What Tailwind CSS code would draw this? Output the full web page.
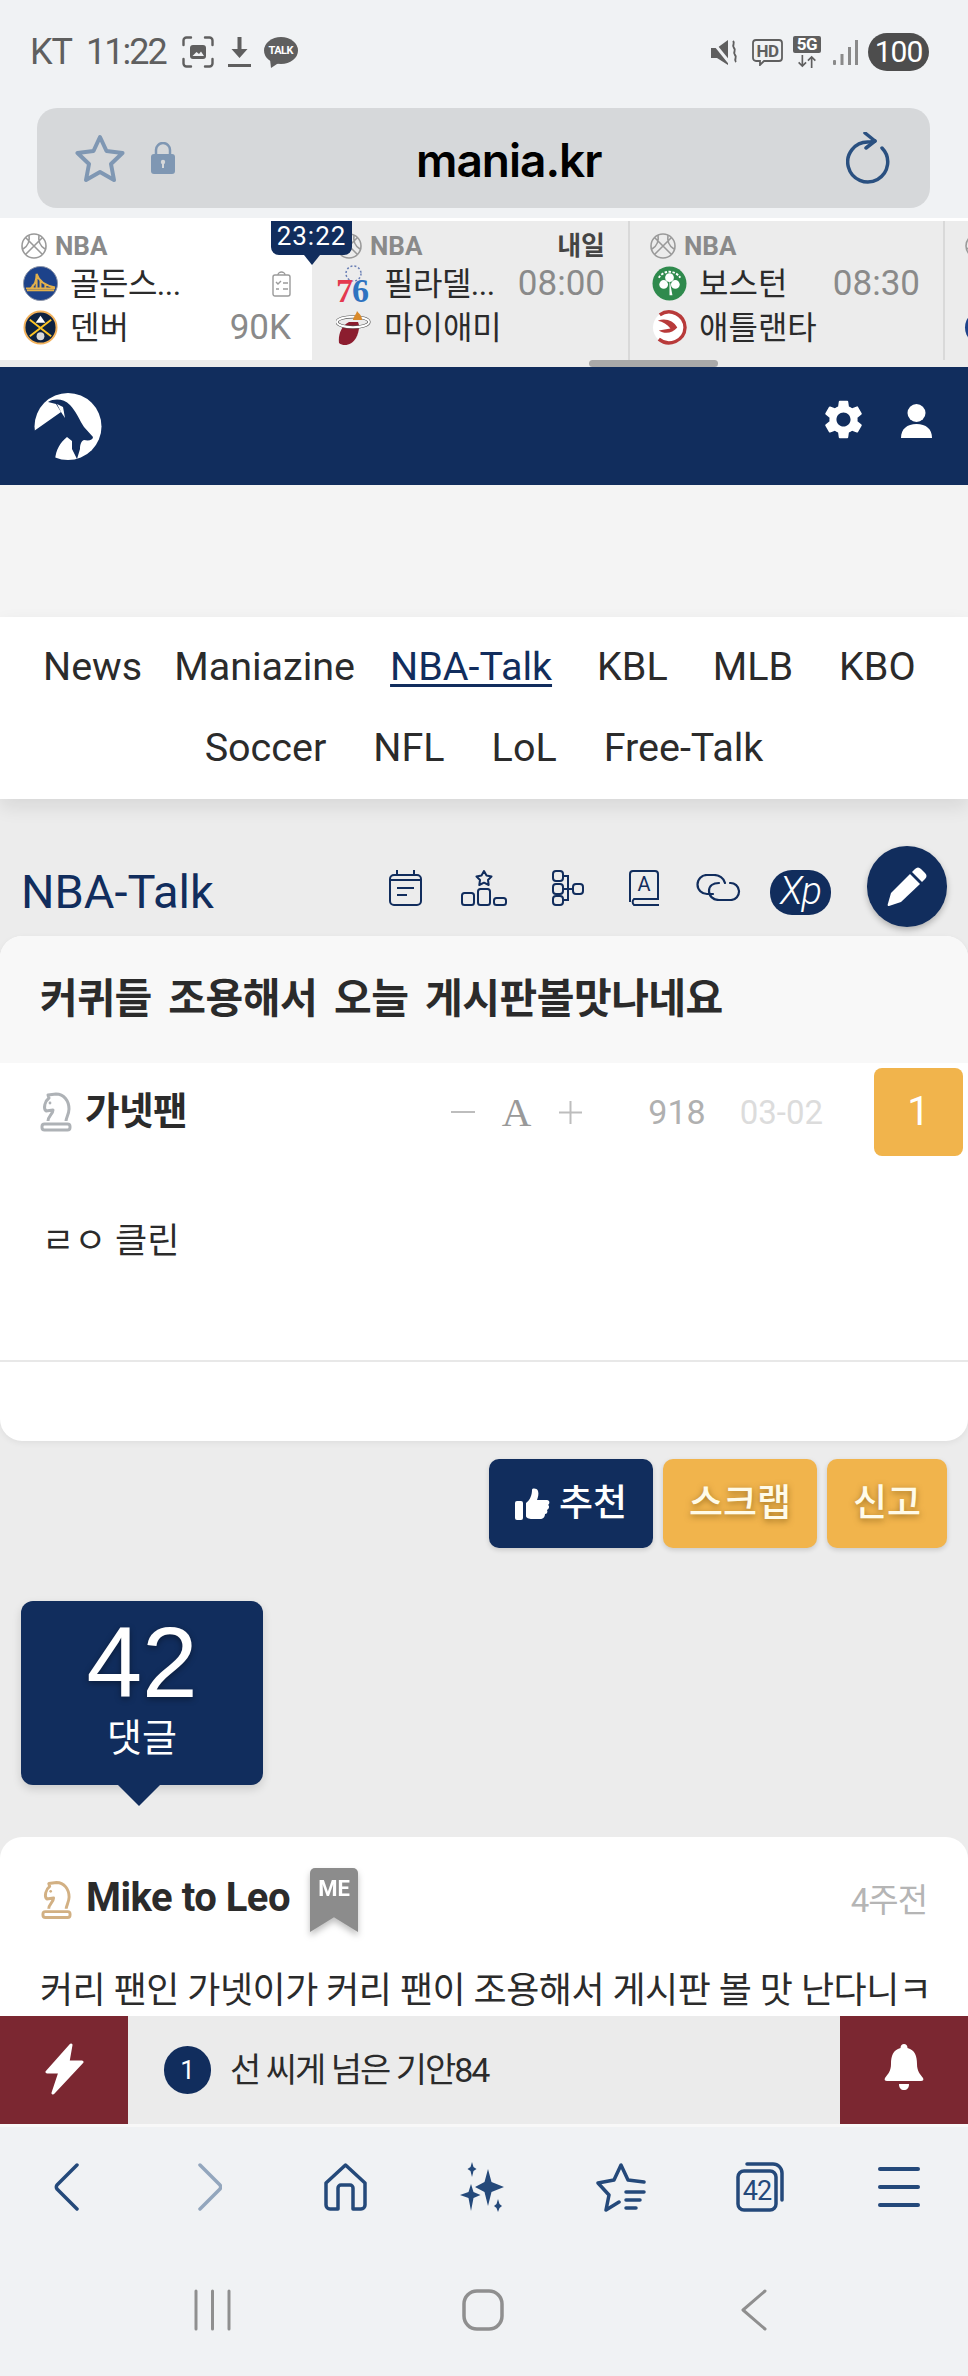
<!DOCTYPE html>
<html lang="ko">
<head>
<meta charset="UTF-8">
<meta name="viewport" content="width=device-width, initial-scale=1.0">
<title>NBA-Talk - mania.kr</title>
<script src="https://cdn.jsdelivr.net/npm/@tailwindcss/browser@4"></script>
</head>
<body class="bg-[#ececec]">
<svg class="hidden" aria-hidden="true">
  <symbol id="ball" viewBox="0 0 26 26">
    <g fill="none" stroke="#9a9a9a" stroke-width="1.6">
      <circle cx="13" cy="13" r="12"/>
      <path d="M4.5 4.5 21.5 21.5M21.5 4.5 4.5 21.5M8 2C9 8 7 13 2 16M18 2C17 8 19 13 24 16"/>
    </g>
  </symbol>
  <symbol id="knight" viewBox="0 0 32 40">
    <path d="M8 29C8 24 13 22 13 18L6 19C3 16 5 9 9 6L8 3L16 2C24 2 29 9 29 17C29 22 26 26 26 29" fill="none" stroke="currentColor" stroke-width="3" stroke-linejoin="round"/>
    <circle cx="10" cy="11" r="1.4" fill="currentColor"/>
    <rect x="2" y="32" width="28" height="6" rx="2.5" fill="none" stroke="currentColor" stroke-width="3"/>
  </symbol>
</svg>

<div class="w-[968px] h-[2376px] overflow-hidden flex flex-col font-['Roboto','Noto_Sans_CJK_KR',sans-serif] text-[#2b2b2b]">

  <!-- status bar -->
  <div class="h-[108px] shrink-0 bg-[#f0f2f4] flex items-center pl-[30px] pr-[39px] pb-[4px] text-[#5f5f5f]">
    <span class="text-[36px] leading-none tracking-[-1px]">KT</span>
    <span class="text-[36px] leading-none ml-[14px] tracking-[-2px]">11:22</span>
    <svg class="w-[32px] h-[32px] ml-[16px]" viewBox="0 0 32 32" fill="none" stroke="#5f5f5f" stroke-width="2.4" stroke-linecap="round">
      <path d="M1.5 9V4.5a3 3 0 0 1 3-3H9M23 1.5h4.500a3 3 0 0 1 3 3V9M1.500 23v4.500a3 3 0 0 0 3 3H9M30.500 23v4.500a3 3 0 0 1-3 3H23"/>
      <rect x="8" y="9" width="16" height="14" rx="3" fill="#5f5f5f" stroke="none"/>
      <path d="M10.500 20l4-4 2.500 2 2-2.500 3 4.500z" fill="#f0f2f4" stroke="none"/>
    </svg>
    <svg class="w-[23px] h-[31px] ml-[14px]" viewBox="0 0 23 31" fill="#5f5f5f">
      <path d="M9.500 0h4v12h6L11.500 21 3.500 12h6z"/><rect y="27" width="23" height="3"/>
    </svg>
    <div class="relative ml-[13px] w-[34px] h-[31px]">
      <svg class="w-[34px] h-[31px]" viewBox="0 0 34 31" fill="#5f5f5f"><ellipse cx="17" cy="13.500" rx="17" ry="13.500"/><path d="M6 22l1 9 9-6z"/></svg>
      <span class="absolute left-0 top-[7px] w-[34px] text-center text-[11px] leading-[13px] font-bold text-white tracking-[-0.5px]">TALK</span>
    </div>

    <svg class="w-[27px] h-[27px] ml-auto" viewBox="0 0 27 27" fill="#5f5f5f">
      <path d="M0 9h6l11-8v25L6 19H0z"/>
      <path d="M1 2 18 23" stroke="#f0f2f4" stroke-width="3"/>
      <path d="M22 2c3 3-2 4 1 7s-2 4 1 7-2 4 1 7" fill="none" stroke="#5f5f5f" stroke-width="2"/>
    </svg>
    <div class="relative ml-[14px] w-[31px] h-[27px]">
      <svg class="w-[31px] h-[27px]" viewBox="0 0 31 27" fill="none" stroke="#5f5f5f" stroke-width="1.800"><path d="M4 1h23a3 3 0 0 1 3 3v15a3 3 0 0 1-3 3H12l-4 4v-4H4a3 3 0 0 1-3-3V4a3 3 0 0 1 3-3z"/></svg>
      <span class="absolute left-0 top-[3px] w-[31px] text-center text-[17px] leading-[18px] font-bold text-[#5f5f5f] tracking-[-0.5px]">HD</span>
    </div>
    <div class="ml-[10px] w-[28px] h-[32px] flex flex-col items-center">
      <span class="w-[28px] h-[17px] rounded-[2px] bg-[#5f5f5f] text-white text-[17px] leading-[17px] font-bold text-center tracking-[-0.5px]">5G</span>
      <svg class="w-[22px] h-[14px] mt-[2px]" viewBox="0 0 22 14" fill="none" stroke="#5f5f5f" stroke-width="1.800"><path d="M6 0v12M2 8l4 4 4-4M16 14V2M12 6l4-4 4 4"/></svg>
    </div>
    <svg class="w-[25px] h-[26px] ml-[12px]" viewBox="0 0 25 26" fill="#8a8a8a"><rect x="0" y="21" width="3" height="5" rx="1"/><rect x="7.500" y="15" width="3" height="11"/><rect x="15" y="8" width="3" height="18"/><rect x="22" y="1" width="3" height="25"/></svg>
    <span class="ml-[10px] w-[61px] h-[38px] rounded-full bg-[#4d4d4d] text-white text-[30px] leading-[38px] text-center tracking-[-1px]">100</span>
  </div>

  <!-- url bar -->
  <div class="h-[110px] shrink-0 bg-[#f0f2f4] px-[37px]">
    <div class="h-[100px] w-[893px] rounded-[20px] bg-[#d6d8da] relative flex items-center pl-[38px] pr-[40px]">
      <svg class="w-[50px] h-[49px]" viewBox="0 0 50 49" fill="none" stroke="#7f97b3" stroke-width="4" stroke-linejoin="round"><path d="M25 3l6.500 14 16 2-11.500 11 3 16-14-8-14 8 3-16L2.500 19l16-2z"/></svg>
      <svg class="w-[24px] h-[32px] ml-[26px]" viewBox="0 0 24 32"><path d="M5 14V8a7 7 0 0 1 14 0v6" fill="none" stroke="#7f97b3" stroke-width="2.500"/><rect y="12" width="24" height="20" rx="3" fill="#7f97b3"/><circle cx="12" cy="20" r="2.200" fill="#d6d8da"/><rect x="11" y="20" width="2" height="6" fill="#d6d8da"/></svg>
      <span class="absolute left-[379px] top-[28px] font-['Inter',sans-serif] font-semibold text-[46px] leading-[48px] text-black tracking-[-1px]">mania.kr</span>
      <svg class="w-[44px] h-[52px] ml-auto" viewBox="0 0 44 52" fill="none" stroke="#2a5080" stroke-width="3.500" stroke-linecap="round" stroke-linejoin="round"><path d="M36 16A20 20 0 1 1 22 10C24 10 26 9.500 29 9"/><path d="M19 1l10 8-9 7"/></svg>
    </div>
  </div>
  <div class="h-[3px] shrink-0 bg-white"></div>

  <!-- score ticker -->
  <div class="h-[146px] shrink-0 relative bg-[#ececec] flex overflow-hidden">
    <div class="w-[312px] h-[139px] shrink-0 bg-white pl-[21px] pr-[21px] pt-[12px]">
      <div class="h-[26px] flex items-center"><svg class="w-[26px] h-[26px]"><use href="#ball"/></svg><span class="ml-[8px] text-[26px] font-bold text-[#8a8a8a]">NBA</span></div>
      <div class="h-[35px] mt-[7px] flex items-center">
        <svg class="w-[35px] h-[35px] ml-[2px]" viewBox="0 0 36 36"><circle cx="18" cy="18" r="17.500" fill="#1d428a" stroke="#8d96a8"/><path d="M3 23h30M8 23c4-3 6-8 6-15M14 8c2 7 8 12 19 14M14 8v15M10 19v4M18 15v8M23 19v4" fill="none" stroke="#e3b04b" stroke-width="2"/><rect x="4" y="24" width="28" height="2" fill="#e3b04b"/></svg>
        <span class="ml-[12px] text-[32px] leading-none tracking-[-0.500px]">골든스...</span>
        <svg class="w-[19px] h-[26px] ml-auto" viewBox="0 0 19 26" fill="none" stroke="#9a9a9a" stroke-width="1.400"><rect x="1" y="4" width="17" height="21" rx="2"/><path d="M6 4c0-2 2-3 3.500-3S13 2 13 4"/><path d="M4 11l2 2 3-3M11 12h5M4 18h3M11 18h5"/></svg>
      </div>
      <div class="h-[35px] mt-[9px] flex items-center">
        <svg class="w-[35px] h-[35px] ml-[2px]" viewBox="0 0 36 36"><circle cx="18" cy="18" r="16.500" fill="#0e2240" stroke="#f2b25c" stroke-width="2"/><path d="M7 10l22 17M29 10L7 27" stroke="#fec524" stroke-width="2"/><path d="M18 6l5 7h-10z" fill="#fff"/><circle cx="18" cy="27" r="4" fill="#d8d8d8"/></svg>
        <span class="ml-[12px] text-[32px] leading-none">덴버</span>
        <span class="ml-auto text-[35px] leading-none text-[#8a8a8a]">90K</span>
      </div>
    </div>

    <div class="w-[318px] h-[139px] shrink-0 border-r-2 border-[#d9d9d9] pl-[24px] pr-[23px] pt-[12px]">
      <div class="h-[26px] flex items-center"><svg class="w-[26px] h-[26px]"><use href="#ball"/></svg><span class="ml-[8px] text-[26px] font-bold text-[#8a8a8a]">NBA</span><span class="ml-auto text-[26px] leading-none font-bold text-[#444]">내일</span></div>
      <div class="h-[35px] mt-[7px] flex items-center">
        <div class="relative w-[35px] h-[35px] shrink-0">
          <svg class="absolute left-[9px] -top-[1px] w-[17px] h-[17px]" viewBox="0 0 17 17"><circle cx="8.500" cy="8.500" r="7.500" fill="none" stroke="#6a7fb5" stroke-width="1.500" stroke-dasharray="2 2"/></svg>
          <span class="absolute left-0 top-[8px] font-['Liberation_Serif',serif] font-bold text-[34px] leading-none text-[#e4394f]">7</span>
          <span class="absolute left-[16px] top-[8px] font-['Liberation_Serif',serif] font-bold text-[34px] leading-none text-[#2e73c0]">6</span>
        </div>
        <span class="ml-[13px] text-[32px] leading-none tracking-[-0.500px] whitespace-nowrap">필라델...</span>
        <span class="ml-auto text-[35px] leading-none text-[#8a8a8a]">08:00</span>
      </div>
      <div class="h-[35px] mt-[9px] flex items-center">
        <svg class="w-[35px] h-[36px] shrink-0" viewBox="0 0 35 36"><path d="M13 12C5 16 2 25 3 33c5 4 13 2 17-5 3-6 4-12 2-16z" fill="#8c1d2f"/><ellipse cx="17" cy="12" rx="16" ry="5.200" fill="none" stroke="#555" stroke-width="3.200"/><ellipse cx="17" cy="12" rx="16" ry="5.200" fill="none" stroke="#fff" stroke-width="2"/><path d="M21 1c2 3 5 4 5 9h-9c0-3 3-5 4-9z" fill="#d98a2b"/></svg>
        <span class="ml-[13px] text-[32px] leading-none">마이애미</span>
      </div>
    </div>

    <div class="w-[315px] h-[139px] shrink-0 border-r-2 border-[#d9d9d9] pl-[20px] pr-[23px] pt-[12px]">
      <div class="h-[26px] flex items-center"><svg class="w-[26px] h-[26px]"><use href="#ball"/></svg><span class="ml-[8px] text-[26px] font-bold text-[#8a8a8a]">NBA</span></div>
      <div class="h-[35px] mt-[7px] flex items-center">
        <svg class="w-[35px] h-[35px] ml-[2px] shrink-0" viewBox="0 0 36 36"><circle cx="18" cy="18" r="17.500" fill="#2f8a4d"/><circle cx="18" cy="12" r="4.500" fill="#fff"/><circle cx="12" cy="19" r="4.500" fill="#fff"/><circle cx="24" cy="19" r="4.500" fill="#fff"/><path d="M18 14l3 16h-3z" fill="#fff"/><path d="M7 12a13 13 0 0 1 22 0" fill="none" stroke="#fff" stroke-width="2" stroke-dasharray="2.500 1.500"/></svg>
        <span class="ml-[12px] text-[32px] leading-none">보스턴</span>
        <span class="ml-auto text-[35px] leading-none text-[#8a8a8a]">08:30</span>
      </div>
      <div class="h-[35px] mt-[9px] flex items-center">
        <svg class="w-[35px] h-[35px] ml-[2px] shrink-0" viewBox="0 0 36 36"><circle cx="18" cy="18" r="17" fill="#fff"/><path d="M8 5a16.500 16.500 0 0 1 26 13 16.500 16.500 0 0 1-27 12" fill="none" stroke="#b83a3a" stroke-width="3.500"/><path d="M6 11c8-3 16 0 20 7-5 6-13 7-19 3l12-2c-3-4-8-7-13-8z" fill="#b83a3a"/></svg>
        <span class="ml-[12px] text-[32px] leading-none">애틀랜타</span>
      </div>
    </div>

    <div class="w-[60px] h-[139px] shrink-0 pl-[20px] pt-[12px]">
      <svg class="w-[26px] h-[26px]"><use href="#ball"/></svg>
      <div class="w-[35px] h-[35px] rounded-full bg-[#1d428a] mt-[51px]"></div>
    </div>

    <!-- live timer tooltip and scrollbar sit over the ticker -->
    <div class="absolute left-[271px] top-0 w-[81px] h-[34px] bg-[#112d5d] rounded-b-[8px] text-white text-[26px] leading-[31px] text-center tracking-[1px]">23:22</div>
    <svg class="absolute left-[304px] top-[34px] w-[16px] h-[10px]" viewBox="0 0 16 10" fill="#112d5d"><path d="M0 0h16L8 10z"/></svg>
    <div class="absolute left-[589px] top-[139px] w-[129px] h-[7px] rounded-full bg-[#a9a9a9]"></div>
  </div>

  <!-- site header -->
  <div class="h-[118px] shrink-0 bg-[#112d5d] flex items-center pl-[34px]">
    <svg class="w-[68px] h-[67px]" viewBox="0 0 68 67">
      <circle cx="34" cy="33.500" r="33.500" fill="#fff"/>
      <path d="M0 38L27 19L22 11L14 9C21 5 30 6 36 12C42 18 46 28 50 34L59 44C59 47 55 48 50 47C47 48 46 52 46 56L43 66L38 56L38 48L33 44C26 50 22 56 21 67L-5 67Z" fill="#112d5d"/>
      <path d="M23 11l6 3 2 11-4-6z" fill="#fff"/>
    </svg>
    <svg class="w-[47px] h-[47px] ml-[718px] -mt-[13px]" viewBox="0 0 24 24" fill="#fff"><path d="M19.140 12.940c.040-.3.060-.61.060-.94 0-.32-.020-.64-.070-.94l2.030-1.580a.49.49 0 0 0 .12-.61l-1.920-3.320a.488.488 0 0 0-.59-.22l-2.390.96c-.5-.38-1.030-.7-1.620-.94l-.36-2.540a.484.484 0 0 0-.48-.41h-3.840c-.24 0-.43.17-.47.41l-.36 2.540c-.59.24-1.130.57-1.620.94l-2.390-.96c-.22-.08-.47 0-.59.22L2.740 8.870c-.12.21-.08.47.12.61l2.030 1.580c-.05.3-.09.63-.09.94s.020.64.070.94l-2.030 1.580a.49.49 0 0 0-.12.61l1.920 3.320c.12.22.37.29.59.22l2.390-.96c.5.38 1.030.7 1.620.94l.36 2.540c.05.24.24.41.48.41h3.840c.24 0 .44-.17.47-.41l.36-2.540c.59-.24 1.130-.56 1.620-.94l2.390.96c.22.080.47 0 .59-.22l1.920-3.320c.12-.22.070-.47-.12-.61l-2.010-1.580zM12 15.600c-1.980 0-3.600-1.620-3.600-3.600s1.620-3.600 3.600-3.600 3.600 1.620 3.600 3.600-1.620 3.600-3.600 3.600z"/></svg>
    <svg class="w-[31px] h-[34px] ml-[34px] -mt-[10px]" viewBox="0 0 31 34" fill="#fff"><circle cx="15.500" cy="9" r="9"/><path d="M0 34c0-9 6-14 15.500-14S31 25 31 34z"/></svg>
  </div>

  <!-- ad gap -->
  <div class="h-[132px] shrink-0 bg-[#f4f4f4]"></div>

  <!-- board menu -->
  <nav class="relative h-[182px] shrink-0 bg-white pt-[9px] text-[39.500px] leading-[81px] shadow-[0_8px_18px_rgba(0,0,0,0.09)]">
    <div class="flex pl-[43px]">
      <span>News</span>
      <span class="ml-[32px]">Maniazine</span>
      <span class="ml-[35px] text-[#112d5d] underline decoration-[3px] underline-offset-[4px]">NBA-Talk</span>
      <span class="ml-[45px]">KBL</span>
      <span class="ml-[45px]">MLB</span>
      <span class="ml-[46px]">KBO</span>
    </div>
    <div class="flex justify-center gap-x-[47px]">
      <span>Soccer</span><span>NFL</span><span>LoL</span><span>Free-Talk</span>
    </div>
  </nav>

  <main class="flex-1 overflow-hidden bg-[#ececec]">
    <!-- board title + tools -->
    <div class="h-[137px] flex items-start pl-[21px] pr-[21px]">
      <span class="text-[47px] leading-[54px] text-[#112d5d] mt-[66px]">NBA-Talk</span>
      <svg class="w-[33px] h-[36px] mt-[71px] ml-auto" viewBox="0 0 33 36" fill="none" stroke="#112d5d" stroke-width="2"><rect x="1" y="5" width="31" height="30" rx="4"/><path d="M8 0v5M25 0v5M1 10h31M8 18h17M8 25h10"/></svg>
      <svg class="w-[46px] h-[36px] mt-[71px] ml-[39px]" viewBox="0 0 46 36" fill="none" stroke="#112d5d" stroke-width="2" stroke-linejoin="round"><path d="M23 1l2.500 4.500 5 1-3.500 3.500.7 5-4.700-2.300-4.700 2.300.7-5-3.500-3.500 5-1z"/><rect x="1" y="23" width="12" height="12" rx="2.500"/><rect x="17" y="19" width="12" height="16" rx="2.500"/><rect x="33" y="28" width="12" height="7" rx="2.500"/></svg>
      <svg class="w-[32px] h-[36px] mt-[71px] ml-[45px]" viewBox="0 0 32 36" fill="none" stroke="#112d5d" stroke-width="2"><rect x="1" y="1" width="10" height="10" rx="3"/><rect x="1" y="14" width="10" height="10" rx="3"/><rect x="1" y="26" width="10" height="9" rx="3"/><rect x="21" y="14" width="10" height="10" rx="3"/><path d="M11 6h5v24h-5M11 19h10"/></svg>
      <svg class="w-[31px] h-[36px] mt-[71px] ml-[45px]" viewBox="0 0 31 36" fill="none" stroke="#112d5d" stroke-width="2"><path d="M4 1h22a3 3 0 0 1 3 3v25H5a4 4 0 0 0 0 6h25M1 32V4a3 3 0 0 1 3-3"/><text x="15" y="21" text-anchor="middle" font-family="Roboto" font-size="20" fill="#112d5d" stroke="none">A</text></svg>
      <svg class="w-[46px] h-[27px] mt-[75px] ml-[35px]" viewBox="0 0 46 27" fill="none" stroke="#112d5d" stroke-width="2.200" stroke-linecap="round"><path d="M30 9C29 4 24 1 19 1H12A9.500 9.500 0 0 0 12 20H18"/><path d="M35 9A8.500 8.500 0 0 1 36 26H24C18 26 14 22 14 17C14 12 18 9 24 9"/></svg>
      <span class="w-[61px] h-[45px] mt-[71px] ml-[29px] rounded-[22px] bg-[#112d5d] text-white italic font-light text-[38px] leading-[43px] text-center tracking-[-1px]">Xp</span>
      <div class="w-[80px] h-[81px] mt-[47px] ml-[36px] rounded-full bg-[#112d5d] shadow-[0_3px_6px_rgba(0,0,0,0.25)] flex items-center justify-center">
        <svg class="w-[40px] h-[40px]" viewBox="0 0 40 40" fill="#fff"><path d="M2 39c-1 0-1.500-.5-1.300-1.500L4 26 23 7l10 10-19 18z"/><path d="M25 5l3-3c2-2 4-2 6 0l4 4c2 2 2 4 0 6l-3 3z"/></svg>
      </div>
    </div>

    <!-- post -->
    <article class="h-[505px] bg-white rounded-[22px] overflow-hidden shadow-[0_2px_6px_rgba(0,0,0,0.06)]">
      <h1 class="h-[127px] bg-[#f8f8f8] pl-[40px] text-[41px] leading-[127px] font-bold [word-spacing:7px] tracking-[-0.500px] whitespace-nowrap">커퀴들 조용해서 오늘 게시판볼맛나네요</h1>
      <div class="flex items-center pt-[5px]">
        <svg class="w-[32px] h-[40px] ml-[40px] text-[#aeb2b6]"><use href="#knight"/></svg>
        <span class="ml-[13px] text-[37.500px] leading-none font-bold tracking-[-0.500px]">가넷팬</span>
        <svg class="w-[24px] h-[2px] ml-auto" viewBox="0 0 24 2"><rect width="24" height="2" fill="#bdbdbd"/></svg>
        <span class="ml-[27px] font-['Liberation_Serif',serif] text-[41px] leading-none text-[#999]">A</span>
        <svg class="w-[23px] h-[23px] ml-[28px]" viewBox="0 0 23 23"><path d="M0 11.500h23M11.500 0v23" stroke="#bdbdbd" stroke-width="2"/></svg>
        <span class="ml-[66px] text-[34px] leading-none text-[#b0b0b0]">918</span>
        <span class="ml-[34px] text-[33px] leading-none text-[#dcdcdc]">03-02</span>
        <span class="ml-[51px] mr-[5px] w-[89px] h-[88px] rounded-[8px] bg-[#f1b44c] text-white text-[40px] leading-[88px] text-center">1</span>
      </div>
      <p class="mt-[61px] pl-[42px] text-[35px] leading-[50px]">ㄹㅇ 클린</p>
      <div class="mt-[93px] h-[2px] bg-[#e8e8e8]"></div>
    </article>

    <!-- post actions -->
    <div class="mt-[18px] flex justify-end gap-x-[10px] pr-[21px]">
      <button class="w-[164px] h-[89px] rounded-[10px] bg-[#112d5d] text-white text-[37px] font-medium flex items-center justify-center gap-x-[9px] shadow-[0_2px_5px_rgba(0,0,0,0.15)]">
        <svg class="w-[35px] h-[32px]" viewBox="0 0 35 32" fill="#fff"><rect y="13" width="8" height="19" rx="2"/><path d="M11 15c4-3 6-8 6-13 0-2 5-2 6 1 1 3 0 6-1 9h10c3 0 3 4 1 5 2 1 1 4-1 5 1 2 0 4-2 4 0 3-2 5-5 5H17c-3 0-6-1-6-3z"/></svg>
        <span>추천</span>
      </button>
      <button class="w-[154px] h-[89px] rounded-[10px] bg-[#f1b44c] text-[#fffbe8] text-[37px] font-medium [text-shadow:0_2px_6px_rgba(90,60,0,0.55)] shadow-[0_2px_5px_rgba(0,0,0,0.15)]">스크랩</button>
      <button class="w-[120px] h-[89px] rounded-[10px] bg-[#f1b44c] text-[#fffbe8] text-[37px] font-medium [text-shadow:0_2px_6px_rgba(90,60,0,0.55)] shadow-[0_2px_5px_rgba(0,0,0,0.15)]">신고</button>
    </div>

    <!-- comment count -->
    <div class="relative mt-[53px] ml-[21px] w-[242px] h-[184px] rounded-[12px] bg-[#112d5d] text-white text-center shadow-[0_4px_10px_rgba(0,0,0,0.14)]">
      <div class="pt-[6px] font-['Liberation_Sans',sans-serif] text-[100px] leading-[110px] [text-shadow:0_2px_6px_rgba(0,0,0,0.4)]">42</div>
      <div class="text-[38px] leading-[44px] -mt-[1px]">댓글</div>
      <svg class="absolute left-[97px] top-[184px] w-[42px] h-[21px]" viewBox="0 0 42 21" fill="#112d5d"><path d="M0 0h42L21 21z"/></svg>
    </div>

    <!-- first comment, cut off by the bars below -->
    <section class="mt-[52px] h-[400px] bg-white rounded-t-[22px] px-[41px] pt-[31px]">
      <div class="h-[64px] flex items-center">
        <svg class="w-[31px] h-[40px] text-[#d2b083]"><use href="#knight"/></svg>
        <span class="ml-[14px] text-[40px] leading-none font-bold tracking-[-0.500px] -mt-[4px]">Mike to Leo</span>
        <div class="ml-[20px] drop-shadow-[0_4px_3px_rgba(0,0,0,0.25)]">
          <div class="w-[48px] h-[64px] rounded-t-[5px] bg-[#8c8c8c] text-white text-[22px] leading-[26px] font-bold text-center pt-[8px] [clip-path:polygon(0_0,100%_0,100%_100%,50%_77%,0_100%)]">ME</div>
        </div>
        <span class="ml-auto text-[33px] leading-none text-[#b5b5b5] tracking-[-1px]">4주전</span>
      </div>
      <p class="mt-[34px] -ml-[1px] text-[36px] leading-[50px] whitespace-nowrap tracking-[-0.500px]">커리 팬인 가넷이가 커리 팬이 조용해서 게시판 볼 맛 난다니ㅋ</p>
    </section>
  </main>

  <!-- hot topic bar -->
  <div class="h-[108px] shrink-0 bg-[#ebebeb] flex items-center">
    <div class="w-[128px] h-[108px] bg-[#7b2731] flex items-center justify-center">
      <svg class="w-[40px] h-[52px] -mt-[2px]" viewBox="0 0 40 52" fill="#fff" stroke="#fff" stroke-width="3" stroke-linejoin="round"><path d="M27 2L3 29h13L9 50l29-31H24z"/></svg>
    </div>
    <span class="ml-[36px] w-[47px] h-[48px] rounded-full bg-[#112d5d] text-white text-[26px] leading-[48px] text-center">1</span>
    <span class="ml-[19px] text-[34px] leading-none tracking-[-2px] whitespace-nowrap">선 씨게 넘은 기안84</span>
    <div class="ml-auto w-[128px] h-[108px] bg-[#7b2731] flex items-center justify-center">
      <svg class="w-[40px] h-[46px] -mt-[6px]" viewBox="0 0 40 46" fill="#fff"><path d="M20 0c2 0 3.500 1.500 3.500 4C31 6 33 12 33 20c0 7 3 10 6 14 1 2 0 3-2 3H3c-2 0-3-1-2-3 3-4 6-7 6-14 0-8 2-14 9.500-16C16.500 1.500 18 0 20 0z"/><path d="M15 40h10c0 4-2 6-5 6s-5-2-5-6z"/></svg>
    </div>
  </div>
  <div class="h-[3px] shrink-0 bg-[#f8f8f8]"></div>

  <!-- browser toolbar -->
  <div class="h-[249px] shrink-0 bg-[#f0f2f4]">
    <div class="flex pl-[54px] pt-[35px] h-[85px]">
      <svg class="w-[25px] h-[50px]" viewBox="0 0 25 50" fill="none" stroke="#24497a" stroke-width="3.500" stroke-linecap="round" stroke-linejoin="round"><path d="M23 3L3 23c-1 1.500-1 2.500 0 4l20 20"/></svg>
      <svg class="w-[24px] h-[50px] ml-[119px]" viewBox="0 0 24 50" fill="none" stroke="#93a6bd" stroke-width="3.500" stroke-linecap="round" stroke-linejoin="round"><path d="M2 3l20 20c1 1.500 1 2.500 0 4L2 47"/></svg>
      <svg class="w-[43px] h-[50px] ml-[102px]" viewBox="0 0 43 50" fill="none" stroke="#24497a" stroke-width="3.500" stroke-linejoin="round"><path d="M21.500 3L2 21v22a4 4 0 0 0 4 4h8V26a3 3 0 0 1 3-3h9a3 3 0 0 1 3 3v21h8a4 4 0 0 0 4-4V21z"/></svg>
      <svg class="w-[44px] h-[50px] ml-[93px]" viewBox="0 0 44 50" fill="#24497a"><path d="M28 7l3.500 13 12.500 5-12.500 5L28 44l-3.500-14L15 25l9.500-5z"/><path d="M11 22l2.500 8 7 3-7 3L11 49 8.500 36 0 33l8.500-3z"/><path d="M12 0l1.500 5 3 2-3 2L12 15l-1.500-6-3-2 3-2z"/><path d="M38 37l1.500 5 2.500 2-2.500 2L38 50l-1.500-4-2.500-2 2.500-2z"/></svg>
      <svg class="w-[50px] h-[50px] ml-[92px]" viewBox="0 0 50 50" fill="none" stroke="#24497a" stroke-width="3.500" stroke-linecap="round" stroke-linejoin="round"><path d="M48 20l-16-2-7-15-7 15-16 3 11 12-3 15 13-8"/><path d="M30 30h18M30 38h14M30 46h10"/></svg>
      <div class="relative w-[48px] h-[50px] ml-[90px]">
        <svg class="w-[48px] h-[50px]" viewBox="0 0 48 50" fill="none" stroke="#24497a" stroke-width="3.500" stroke-linecap="round"><rect x="2" y="9" width="38" height="39" rx="6"/><path d="M11 2h26c5 0 9 4 9 9v27"/></svg>
        <span class="absolute left-[3px] top-[15px] w-[36px] text-center text-[27px] leading-[28px] text-[#24497a] tracking-[-1px]">42</span>
      </div>
      <svg class="w-[42px] h-[40px] ml-[94px] mt-[5px]" viewBox="0 0 42 40" fill="#24497a"><rect y="0" width="42" height="4" rx="2"/><rect y="18" width="42" height="4" rx="2"/><rect y="36" width="42" height="4" rx="2"/></svg>
    </div>

    <!-- android nav -->
    <div class="flex pl-[194px] mt-[77px]">
      <svg class="w-[37px] h-[42px]" viewBox="0 0 37 42" fill="none" stroke="#8f8f8f" stroke-width="3" stroke-linecap="round"><path d="M2 2v38M18.500 2v38M35 2v38"/></svg>
      <svg class="w-[42px] h-[42px] ml-[231px]" viewBox="0 0 42 42" fill="none" stroke="#8f8f8f" stroke-width="3.500"><rect x="2" y="2" width="38" height="38" rx="13"/></svg>
      <svg class="w-[26px] h-[42px] ml-[237px]" viewBox="0 0 26 42" fill="none" stroke="#8f8f8f" stroke-width="3" stroke-linecap="round" stroke-linejoin="round"><path d="M24 2L2 21l22 19"/></svg>
    </div>
  </div>
</div>
</body>
</html>
